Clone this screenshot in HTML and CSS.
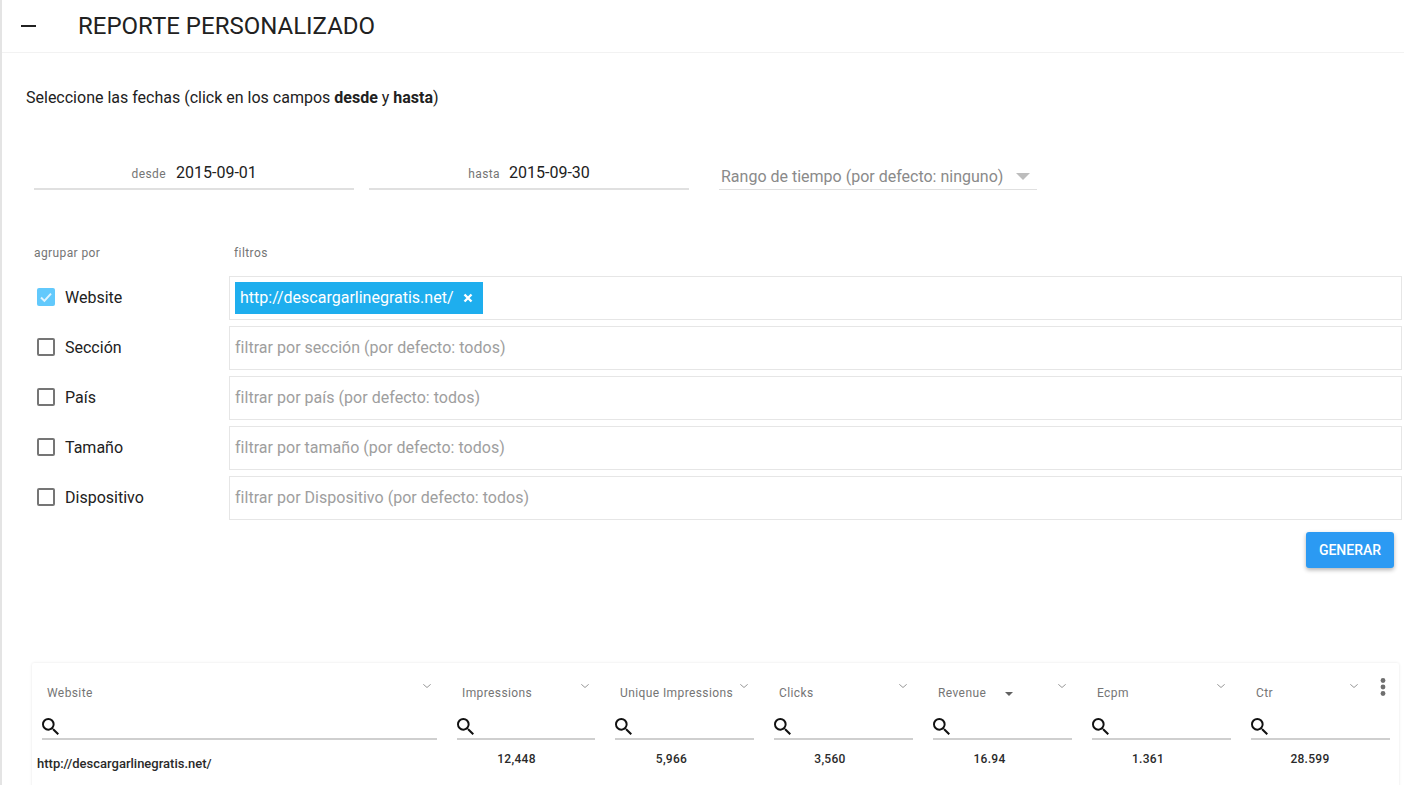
FILE: index.html
```html
<!DOCTYPE html>
<html lang="es">
<head>
<meta charset="utf-8">
<title>Reporte personalizado</title>
<link rel="stylesheet" href="styles.css">
</head>
<body>
<div class="page">
  <header class="top">
    <span class="dash"></span>
    <h1 class="title">REPORTE PERSONALIZADO</h1>
  </header>
  <main class="main">
    <p class="intro">Seleccione las fechas (click en los campos <b>desde</b> y <b>hasta</b>)</p>
    <div class="dates">
      <div class="date"><span class="date-label">desde</span><span class="date-value">2015-09-01</span></div>
      <div class="date"><span class="date-label date-label-to">hasta</span><span class="date-value">2015-09-30</span></div>
      <div class="range"><span>Rango de tiempo (por defecto: ninguno)</span><span class="range-caret"></span></div>
    </div>
    <div class="captions"><span class="cap-left">agrupar por</span><span class="cap-right">filtros</span></div>
    <div class="row">
      <label class="group"><span class="box box-on"><svg viewBox="0 0 18 18" class="tick"><path d="M4 9.5l3.4 3.4L14 5.6"/></svg></span>Website</label>
      <div class="filter"><span class="chip">http://descargarlinegratis.net/<svg viewBox="0 0 10 10" class="chip-x"><path d="M1.5 1.5l7 7M8.5 1.5l-7 7"/></svg></span></div>
    </div>
    <div class="row">
      <label class="group"><span class="box"></span>Sección</label>
      <div class="filter ph">filtrar por sección (por defecto: todos)</div>
    </div>
    <div class="row">
      <label class="group"><span class="box"></span>País</label>
      <div class="filter ph">filtrar por país (por defecto: todos)</div>
    </div>
    <div class="row">
      <label class="group"><span class="box"></span>Tamaño</label>
      <div class="filter ph">filtrar por tamaño (por defecto: todos)</div>
    </div>
    <div class="row">
      <label class="group"><span class="box"></span>Dispositivo</label>
      <div class="filter ph">filtrar por Dispositivo (por defecto: todos)</div>
    </div>
    <div class="actions"><button class="btn">GENERAR</button></div>
    <section class="card">
      <svg class="dots" viewBox="0 0 6 18"><circle cx="3" cy="2.5" r="2.4"/><circle cx="3" cy="9" r="2.4"/><circle cx="3" cy="15.5" r="2.4"/></svg>
      <div class="cols">
        <div class="col"><div class="head"><span>Website</span><svg class="chev" viewBox="0 0 8 4"><path d="M.3.3L4 3.5 7.7.3"/></svg></div><div class="search"><svg class="mag" viewBox="3 3 17.5 17.5"><path d="M15.5 14h-.79l-.28-.27A6.47 6.47 0 0 0 16 9.5 6.5 6.5 0 1 0 9.5 16c1.61 0 3.09-.59 4.23-1.57l.27.28v.79l5 4.99L20.49 19l-4.99-5zm-6 0C7.01 14 5 11.99 5 9.5S7.01 5 9.5 5 14 7.01 14 9.5 11.99 14 9.5 14z"/></svg></div></div>
        <div class="col"><div class="head"><span>Impressions</span><svg class="chev" viewBox="0 0 8 4"><path d="M.3.3L4 3.5 7.7.3"/></svg></div><div class="search"><svg class="mag" viewBox="3 3 17.5 17.5"><path d="M15.5 14h-.79l-.28-.27A6.47 6.47 0 0 0 16 9.5 6.5 6.5 0 1 0 9.5 16c1.61 0 3.09-.59 4.23-1.57l.27.28v.79l5 4.99L20.49 19l-4.99-5zm-6 0C7.01 14 5 11.99 5 9.5S7.01 5 9.5 5 14 7.01 14 9.5 11.99 14 9.5 14z"/></svg></div></div>
        <div class="col"><div class="head"><span>Unique Impressions</span><svg class="chev" viewBox="0 0 8 4"><path d="M.3.3L4 3.5 7.7.3"/></svg></div><div class="search"><svg class="mag" viewBox="3 3 17.5 17.5"><path d="M15.5 14h-.79l-.28-.27A6.47 6.47 0 0 0 16 9.5 6.5 6.5 0 1 0 9.5 16c1.61 0 3.09-.59 4.23-1.57l.27.28v.79l5 4.99L20.49 19l-4.99-5zm-6 0C7.01 14 5 11.99 5 9.5S7.01 5 9.5 5 14 7.01 14 9.5 11.99 14 9.5 14z"/></svg></div></div>
        <div class="col"><div class="head"><span>Clicks</span><svg class="chev" viewBox="0 0 8 4"><path d="M.3.3L4 3.5 7.7.3"/></svg></div><div class="search"><svg class="mag" viewBox="3 3 17.5 17.5"><path d="M15.5 14h-.79l-.28-.27A6.47 6.47 0 0 0 16 9.5 6.5 6.5 0 1 0 9.5 16c1.61 0 3.09-.59 4.23-1.57l.27.28v.79l5 4.99L20.49 19l-4.99-5zm-6 0C7.01 14 5 11.99 5 9.5S7.01 5 9.5 5 14 7.01 14 9.5 11.99 14 9.5 14z"/></svg></div></div>
        <div class="col"><div class="head"><span>Revenue<i class="sort"></i></span><svg class="chev" viewBox="0 0 8 4"><path d="M.3.3L4 3.5 7.7.3"/></svg></div><div class="search"><svg class="mag" viewBox="3 3 17.5 17.5"><path d="M15.5 14h-.79l-.28-.27A6.47 6.47 0 0 0 16 9.5 6.5 6.5 0 1 0 9.5 16c1.61 0 3.09-.59 4.23-1.57l.27.28v.79l5 4.99L20.49 19l-4.99-5zm-6 0C7.01 14 5 11.99 5 9.5S7.01 5 9.5 5 14 7.01 14 9.5 11.99 14 9.5 14z"/></svg></div></div>
        <div class="col"><div class="head"><span>Ecpm</span><svg class="chev" viewBox="0 0 8 4"><path d="M.3.3L4 3.5 7.7.3"/></svg></div><div class="search"><svg class="mag" viewBox="3 3 17.5 17.5"><path d="M15.5 14h-.79l-.28-.27A6.47 6.47 0 0 0 16 9.5 6.5 6.5 0 1 0 9.5 16c1.61 0 3.09-.59 4.23-1.57l.27.28v.79l5 4.99L20.49 19l-4.99-5zm-6 0C7.01 14 5 11.99 5 9.5S7.01 5 9.5 5 14 7.01 14 9.5 11.99 14 9.5 14z"/></svg></div></div>
        <div class="col"><div class="head head-last"><span>Ctr</span><svg class="chev" viewBox="0 0 8 4"><path d="M.3.3L4 3.5 7.7.3"/></svg></div><div class="search"><svg class="mag" viewBox="3 3 17.5 17.5"><path d="M15.5 14h-.79l-.28-.27A6.47 6.47 0 0 0 16 9.5 6.5 6.5 0 1 0 9.5 16c1.61 0 3.09-.59 4.23-1.57l.27.28v.79l5 4.99L20.49 19l-4.99-5zm-6 0C7.01 14 5 11.99 5 9.5S7.01 5 9.5 5 14 7.01 14 9.5 11.99 14 9.5 14z"/></svg></div></div>
      </div>
      <div class="data">
        <span class="cell-site">http://descargarlinegratis.net/</span>
        <span class="cell">12,448</span>
        <span class="cell">5,966</span>
        <span class="cell">3,560</span>
        <span class="cell">16.94</span>
        <span class="cell">1.361</span>
        <span class="cell">28.599</span>
      </div>
    </section>
  </main>
</div>
</body>
</html>
```

FILE: styles.css
```css
* { box-sizing: border-box; }
html, body { margin: 0; height: 785px; overflow: hidden; background: #fff; }
body { font-family: Roboto, "Liberation Sans", sans-serif; color: #212121; }

.page { height: 785px; border-left: 2px solid #e4e4e4; overflow: hidden; }

.top { height: 53px; display: flex; align-items: center; border-bottom: 1px solid #f2f2f2; padding: 0 0 0 19px; }
.dash { width: 15px; height: 2px; background: #212121; margin-right: 42px; }
.title { margin: 0; font-size: 24px; line-height: 28px; font-weight: 400; color: #212121; }

.main { padding: 0 2px 0 24px; }
.intro { margin: 35px 0 0; font-size: 16px; line-height: 20px; color: #212121; }
.intro b { font-weight: 700; }

.dates { display: flex; align-items: flex-start; margin: 48px 0 0 8px; }
.date { width: 320px; height: 34px; margin-right: 15px; display: flex; align-items: center; padding-top: 2px; border-bottom: 2px solid #e0e0e0; }
.date-label { width: 132px; margin-right: 10px; text-align: right; font-size: 12px; letter-spacing: .4px; color: #757575; line-height: 16px; padding-top: 2px; }
.date-label-to { width: 131px; margin-right: 9px; }
.date-value { font-size: 16px; color: #212121; line-height: 20px; }
.range { width: 318px; height: 34px; margin-left: 15px; padding: 8px 7px 0 2px; display: flex; justify-content: space-between; align-items: center; border-bottom: 1px solid #e0e0e0; font-size: 16px; color: #8a8a8a; }
.range-caret { width: 0; height: 0; border-left: 7px solid transparent; border-right: 7px solid transparent; border-top: 7px solid #bdbdbd; }

.captions { display: flex; margin: 55px 0 0 8px; font-size: 12px; line-height: 16px; letter-spacing: .4px; color: #757575; }
.cap-left { width: 200px; }

.row { display: flex; margin: 0 0 6px 8px; }
.captions + .row { margin-top: 15px; }
.group { width: 195px; padding: 0 0 2px 3px; display: flex; align-items: center; font-size: 16px; color: #212121; }
.box { width: 18px; height: 18px; margin-right: 10px; border: 2px solid #757575; border-radius: 2px; }
.box-on { border: 0; background: #62c9fc; }
.tick { display: block; width: 18px; height: 18px; }
.tick path { fill: none; stroke: rgba(255,255,255,.8); stroke-width: 2; }
.filter { flex: 1; height: 44px; padding: 5px; display: flex; align-items: center; border: 1px solid #e6e6e6; font-size: 16px; }
.ph { color: #9e9e9e; padding-bottom: 7px; letter-spacing: .025px; }
.chip { height: 32px; width: 248px; padding: 0 0 2px 5px; display: flex; align-items: center; background: #1eaeee; color: #fff; }
.chip-x { width: 10px; height: 10px; margin-left: 10px; margin-top: 2px; }
.chip-x path { stroke: #fff; stroke-width: 2.4; fill: none; }

.actions { display: flex; justify-content: flex-end; margin: 12px 8px 0 0; }
.btn { width: 88px; height: 36px; border: 0; border-radius: 3px; padding: 0; background: #2b9af3; color: #fff; font: 500 14px Roboto, sans-serif; box-shadow: 0 2px 4px rgba(0,0,0,.3); }

.card { position: relative; width: 1367px; height: 140px; margin: 95px 0 0 6px; padding: 0 10px; border-radius: 2px; box-shadow: 0 0 3px rgba(0,0,0,.1); }
.dots { position: absolute; left: 1348px; top: 15px; width: 6px; height: 18px; fill: #6f6f6f; }

.cols { display: grid; grid-template-columns: 395px 138px repeat(5, 139px); column-gap: 20px; }
.head { height: 40px; padding: 18px 6px 0 5px; display: flex; justify-content: space-between; align-items: flex-start; font-size: 12px; line-height: 24px; letter-spacing: .4px; color: #757575; white-space: nowrap; }
.head-last { padding-right: 32px; }
.sort { display: inline-block; width: 0; height: 0; margin: 0 0 1px 19px; border-left: 4px solid transparent; border-right: 4px solid transparent; border-top: 4px solid #616161; }
.chev { width: 8px; height: 4px; margin: 3px 0 0 0; flex: none; }
.chev path { fill: none; stroke: #8c8c8c; stroke-width: .9; }
.search { height: 37px; padding-top: 15px; border-bottom: 2px solid #cfcfcf; }
.mag { display: block; width: 17px; height: 17px; fill: #111; }

.data { display: grid; grid-template-columns: 401px 157px 153px 164px 155px 162px 162px; margin-left: -5px; font-size: 12px; line-height: 16px; letter-spacing: .3px; color: #2a2a2a; font-weight: 500; }
.cell { padding-top: 11px; text-align: center; }
.cell-site { padding-top: 16px; font-size: 13px; letter-spacing: 0; }
```
